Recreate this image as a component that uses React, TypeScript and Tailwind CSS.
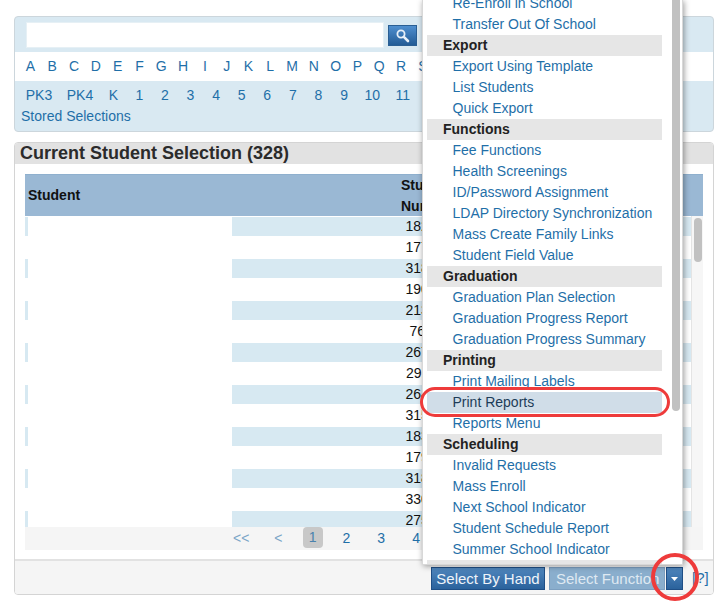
const LETTERS = "ABCDEFGHIJKLMNOPQRS".split("");
const GRADES = [
    { label: "PK3", width: "w-[41px]" },
    { label: "PK4", width: "w-[41px]" },
    { label: "K", width: "w-[26px]" },
    { label: "1", width: "w-[25.6px]" },
    { label: "2", width: "w-[25.6px]" },
    { label: "3", width: "w-[25.6px]" },
    { label: "4", width: "w-[25.6px]" },
    { label: "5", width: "w-[25.6px]" },
    { label: "6", width: "w-[25.6px]" },
    { label: "7", width: "w-[25.6px]" },
    { label: "8", width: "w-[25.6px]" },
    { label: "9", width: "w-[25.6px]" },
    { label: "10", width: "w-[31px]" },
    { label: "11", width: "w-[30px]" },
];
const NUMBERS = ["18256", "17731", "31842", "19065", "21377", "7654", "26719", "29114", "26403", "31568", "18342", "17926", "31877", "33012", "27544"];

const MENU = [
    { items: ["Re-Enroll in School", "Transfer Out Of School"] },
    { title: "Export", items: ["Export Using Template", "List Students", "Quick Export"] },
    {
        title: "Functions",
        items: ["Fee Functions", "Health Screenings", "ID/Password Assignment", "LDAP Directory Synchronization", "Mass Create Family Links", "Student Field Value"],
    },
    { title: "Graduation", items: ["Graduation Plan Selection", "Graduation Progress Report", "Graduation Progress Summary"] },
    { title: "Printing", items: ["Print Mailing Labels", "Print Reports", "Reports Menu"] },
    { title: "Scheduling", items: ["Invalid Requests", "Mass Enroll", "Next School Indicator", "Student Schedule Report", "Summer School Indicator"] },
    { title: "Special", items: [] },
];

function FunctionMenu() {
    return (
        <div className="absolute left-[422px] top-0 flex h-[565px] w-[261px] overflow-hidden border-x border-b border-[#d8d8d8] bg-white shadow-[1px_1px_6px_rgba(0,0,0,0.4)]">
            <div className="mt-[-7px] ml-[4px] w-[235px] shrink-0">
                {MENU.map((group, i) => (
                    <div key={i}>
                        {group.title && (
                            <div className="h-[21px] bg-[#e6e6e6] pl-[16px] text-[14px] font-bold leading-[21px] text-[#222]">{group.title}</div>
                        )}
                        {group.items.map((item) => (
                            <div
                                key={item}
                                className={
                                    item === "Print Reports"
                                        ? "h-[21px] bg-[#d0dde8] pl-[25.5px] text-[14px] leading-[21px] text-[#1d3c58]"
                                        : "h-[21px] pl-[25.5px] text-[14px] leading-[21px] text-[#1f6fa8]"
                                }
                            >
                                {item}
                            </div>
                        ))}
                    </div>
                ))}
            </div>
            {/* menu scrollbar */}
            <div className="ml-[10px] h-[411px] w-[8px] rounded-b-[4px] bg-[#c1c1c1]" />
        </div>
    );
}

function SearchPanel() {
    return (
        <div className="h-[116px] overflow-hidden rounded-[4px] border border-[#ccd6dc] bg-[#d9e9f2]">
            <div className="flex h-[35px] items-start pl-[11px] pt-[5px]">
                <div className="h-[26px] w-[358px] border border-[#e6f0f5] bg-white" />
                <button className="ml-[4px] mt-[3px] flex h-[21px] w-[29px] items-center justify-center border border-[#2a5f94] bg-gradient-to-b from-[#4f8fcf] to-[#235c96]">
                    <svg width="15" height="15" viewBox="0 0 15 15" fill="none" stroke="#e8f0f8">
                        <circle cx="6" cy="6" r="3.6" strokeWidth="1.8" />
                        <path d="M8.8 8.8 13 13" strokeWidth="2.6" strokeLinecap="round" />
                    </svg>
                </button>
            </div>
            <div className="flex h-[29px] items-center bg-white pl-[4.6px] text-[14px] text-[#1f6fa8]">
                {LETTERS.map((letter) => (
                    <span key={letter} className="w-[21.8px] shrink-0 text-center">
                        {letter}
                    </span>
                ))}
            </div>
            <div className="flex pl-[3.5px] pt-[4px] text-[14px] leading-[21px] text-[#1f6fa8]">
                {GRADES.map((grade) => (
                    <span key={grade.label} className={`${grade.width} shrink-0 text-center`}>
                        {grade.label}
                    </span>
                ))}
            </div>
            <div className="pl-[6px] text-[14px] leading-[21px] text-[#1f6fa8]">Stored Selections</div>
        </div>
    );
}

function StudentTable() {
    return (
        <div className="mx-[10px] mt-[10px]">
            <div className="flex h-[42px] border-t border-[#8fb0ce] bg-[#9ab8d4] text-[14px] font-bold leading-[21px] text-[#111]">
                <div className="flex w-[353px] items-center pl-[3px]">Student</div>
                <div className="w-[98px] pl-[23px]">
                    Student
                    <br />
                    Number
                </div>
            </div>
            <div className="flex h-[311px] overflow-hidden">
                <div className="flex-1 overflow-hidden">
                    {NUMBERS.map((num, i) => (
                        <div key={i} className={i % 2 === 0 ? "flex h-[21px] border-y border-white bg-[#d7e9f2]" : "flex h-[21px] border-y border-white bg-white"}>
                            <div className="ml-[3px] h-full w-[204px] border-x border-white bg-white" />
                            <div className="w-[144px]" />
                            <div className="w-[98px] text-center text-[14px] leading-[19px] text-[#111]">{num}</div>
                        </div>
                    ))}
                </div>
                {/* table scrollbar */}
                <div className="w-[12px] border-l border-[#e4e4e4] bg-[#f6f6f6] pl-[2px] pt-[2px]">
                    <div className="h-[44px] w-[8px] rounded-[4px] bg-[#c1c1c1]" />
                </div>
            </div>
            <div className="flex h-[23px] items-start bg-[#f5f5f5] text-[14px] leading-[23px] text-[#1f6fa8]">
                <span className="ml-[208px] text-[#7ba6c8]">&lt;&lt;</span>
                <span className="ml-[25px] text-[#7ba6c8]">&lt;</span>
                <span className="ml-[20px] h-[21px] w-[20px] rounded-[4px] bg-[#c8c8c8] text-center leading-[21px] text-[#4a82ad]">1</span>
                <span className="ml-[20px]">2</span>
                <span className="ml-[27px]">3</span>
                <span className="ml-[27px]">4</span>
            </div>
        </div>
    );
}

function SelectionPanel() {
    return (
        <div className="mt-[10px] flex h-[453px] flex-col overflow-hidden rounded-[4px] border border-[#d4d4d4] bg-white">
            <div className="h-[21px] bg-[#e2e2e2] pl-[5px] text-[18px] font-bold leading-[20px] text-[#2b2b2b]">Current Student Selection (328)</div>
            <StudentTable />
            <div className="mt-[9px] flex flex-1 items-start border-t-2 border-[#e2e2e2] bg-[#f5f5f5] pl-[416px] pt-[6px]">
                <button className="h-[23px] w-[114px] border border-[#1f4f86] bg-gradient-to-b from-[#4f86bd] to-[#2a629c] text-[15px] text-[#eef4fa]">Select By Hand</button>
                <button className="ml-[4px] h-[23px] w-[116px] overflow-hidden whitespace-nowrap border border-[#7c9fc0] bg-[#8aaecd] pl-[6px] text-left text-[15px] text-[#dfe9f2]">Select Function</button>
                <button className="ml-[1px] flex h-[23px] w-[17px] items-center justify-center border border-[#1f4f86] bg-gradient-to-b from-[#4f86bd] to-[#2a629c]">
                    <svg width="7" height="4" viewBox="0 0 7 4">
                        <path d="M0 0h7L3.5 4z" fill="#fff" />
                    </svg>
                </button>
                <span className="ml-[9px] text-[15px] leading-[22px] text-[#1f6fa8]">[?]</span>
            </div>
        </div>
    );
}

export default function App() {
    return (
        <div className="relative h-[602px] w-[721px] overflow-hidden bg-white px-[14px] pt-[16px] font-['Liberation_Sans',Arial,sans-serif]">
            <div className="w-[700px]">
                <SearchPanel />
                <SelectionPanel />
            </div>
            <FunctionMenu />
            {/* red annotation marks */}
            <div className="absolute left-[420px] top-[387px] h-[30px] w-[250px] rounded-[15px] border-[3px] border-[#ee3b3b]" />
            <div className="absolute left-[651px] top-[553px] h-[48px] w-[48px] rounded-full border-[4px] border-[#ee3b3b]" />
        </div>
    );
}
